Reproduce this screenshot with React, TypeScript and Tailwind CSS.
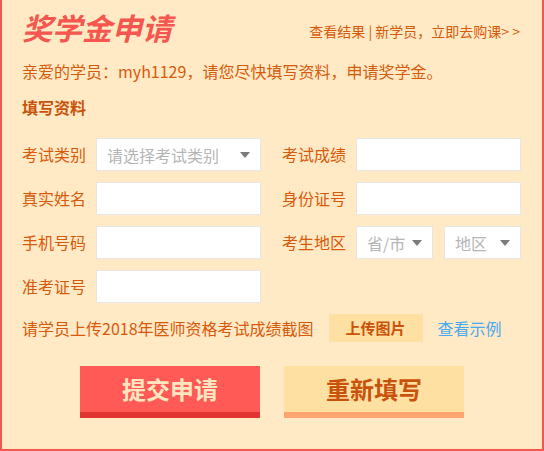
import React from "react";

const font = { fontFamily: '"Noto Sans CJK SC", "Noto Sans", sans-serif' };

function Caret() {
  return (
    <svg width="10" height="6" viewBox="0 0 10 6" className="shrink-0">
      <path d="M0 0 H10 L5 6 Z" fill="#7a7a7a" />
    </svg>
  );
}

function Input({ w = "w-[165px]" }: { w?: string }) {
  return <div className={`${w} shrink-0 h-[33px] bg-white border border-[#e6e6e6]`} />;
}

function Select({ text, w }: { text: string; w: string }) {
  return (
    <div className={`${w} shrink-0 h-[33px] bg-white border border-[#e6e6e6] flex items-center justify-between pl-[10px] pr-[10px] text-[16px] text-[#b5b5b5]`}>
      <span>{text}</span>
      <Caret />
    </div>
  );
}

function Label({ children }: { children: React.ReactNode }) {
  return <div className="w-[74px] shrink-0 text-[16px] text-[#d9590a] leading-[33px]">{children}</div>;
}

export default function App() {
  return (
    <div style={font} className="w-[544px] h-[451px] bg-[#ffeac5] border-l-2 border-r-2 border-b-2 border-[#f5564e] pl-[20px] pr-[20px] flex flex-col">
      <div className="flex items-end justify-between pt-[9px]">
        <div className="text-[30px] leading-[36px] font-bold italic text-[#f5564e]">奖学金申请</div>
        <div className="text-[14px] text-[#d9590a] leading-[18px] pb-[5px] mr-[2px] whitespace-nowrap">
          查看结果 | 新学员，立即去购课&gt; &gt;
        </div>
      </div>
      <div className="mt-[15px] text-[16px] leading-[22px] text-[#d9590a]">
        亲爱的学员：myh1129，请您尽快填写资料，申请奖学金。
      </div>
      <div className="mt-[14px] text-[16px] leading-[22px] font-bold text-[#c9520a]">填写资料</div>
      <div className="mt-[20px] flex flex-col gap-[11px]">
        <div className="flex items-center">
          <Label>考试类别</Label>
          <Select text="请选择考试类别" w="w-[165px]" />
          <div className="w-[21px] shrink-0" />
          <Label>考试成绩</Label>
          <Input />
        </div>
        <div className="flex items-center">
          <Label>真实姓名</Label>
          <Input />
          <div className="w-[21px] shrink-0" />
          <Label>身份证号</Label>
          <Input />
        </div>
        <div className="flex items-center">
          <Label>手机号码</Label>
          <Input />
          <div className="w-[21px] shrink-0" />
          <Label>考生地区</Label>
          <div className="flex gap-[11px]">
            <Select text="省/市" w="w-[77px]" />
            <Select text="地区" w="w-[77px]" />
          </div>
        </div>
        <div className="flex items-center">
          <Label>准考证号</Label>
          <Input />
        </div>
      </div>
      <div className="mt-[11px] flex items-center">
        <div className="text-[16px] text-[#d9590a] whitespace-nowrap">请学员上传2018年医师资格考试成绩截图</div>
        <div className="ml-[15px] w-[94px] h-[28px] bg-[#ffe0a3] flex items-center justify-center text-[15px] font-bold text-[#c9520a]">上传图片</div>
        <div className="ml-[15px] text-[16px] text-[#4aa8f0]">查看示例</div>
      </div>
      <div className="mt-[24px] flex pl-[58px] gap-[24px]">
        <div className="w-[180px] h-[52px] bg-[#ff5a55] border-b-[6px] border-[#e03531] flex items-center justify-center text-[24px] font-bold text-[#ffe6c0]">提交申请</div>
        <div className="w-[180px] h-[52px] bg-[#ffe0a3] border-b-[6px] border-[#ffa572] flex items-center justify-center text-[24px] font-bold text-[#c9520a]">重新填写</div>
      </div>
    </div>
  );
}
